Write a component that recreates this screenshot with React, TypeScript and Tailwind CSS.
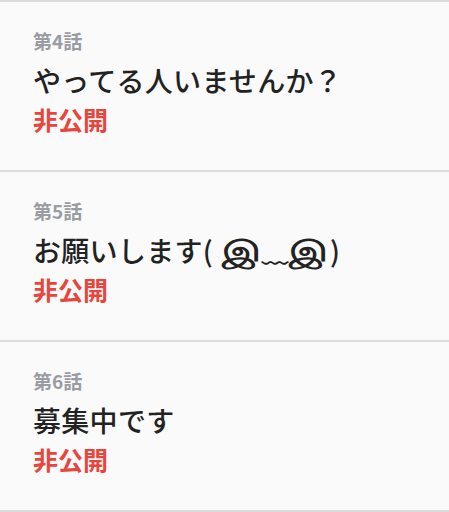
const episodes = [
  { no: "第4話", title: <>やってる人いませんか？</>, status: "非公開" },
  {
    no: "第5話",
    title: (
      <>
        お願いします(
        <span className="ml-[9px] inline-block origin-bottom scale-y-[0.7] text-[40px] leading-[30px] font-bold">இ</span>
        <span className="text-[27px] leading-[0]">﹏</span>
        <span className="inline-block origin-bottom scale-y-[0.7] text-[40px] leading-[30px] font-bold">இ</span>
        <span className="ml-[2px]">)</span>
      </>
    ),
    status: "非公開",
  },
  { no: "第6話", title: <>募集中です</>, status: "非公開" },
]

export default function App() {
  return (
    <main
      className="min-h-screen bg-[#fafafa]"
      style={{ fontFamily: '"Noto Sans CJK JP", "Noto Sans", sans-serif' }}
    >
      <ul className="border-t-2 border-[#dcdcdc]">
        {episodes.map((ep) => (
          <li key={ep.no} className="h-[170px] border-b-2 border-[#dcdcdc] pl-[33px] pt-[25px]">
            <p className="text-[19px] leading-[28px] font-bold text-[#999ca2]">{ep.no}</p>
            <h2 className="mt-[5px] h-[40px] text-[28px] leading-[40px] font-medium tracking-[0.3px] text-[#222222] whitespace-nowrap">
              {ep.title}
            </h2>
            <p className="mt-[3px] text-[25px] leading-[33px] font-bold text-[#e8453c]">{ep.status}</p>
          </li>
        ))}
      </ul>
    </main>
  )
}
